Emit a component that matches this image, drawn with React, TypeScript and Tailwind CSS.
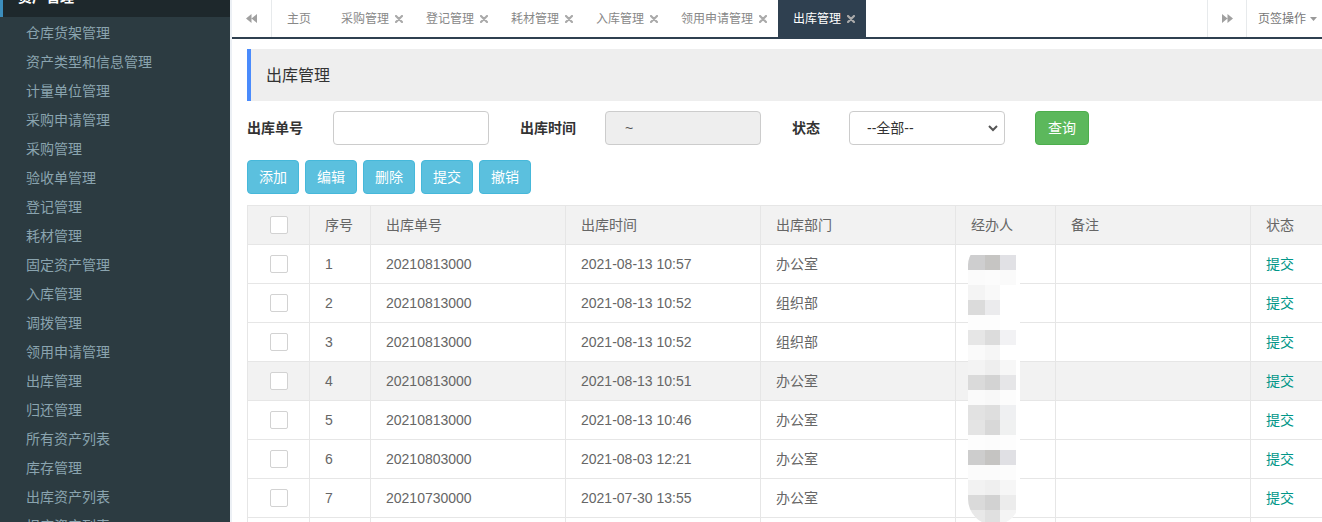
import React from "react";

const menu = [
  "仓库货架管理",
  "资产类型和信息管理",
  "计量单位管理",
  "采购申请管理",
  "采购管理",
  "验收单管理",
  "登记管理",
  "耗材管理",
  "固定资产管理",
  "入库管理",
  "调拨管理",
  "领用申请管理",
  "出库管理",
  "归还管理",
  "所有资产列表",
  "库存管理",
  "出库资产列表",
  "报废资产列表",
];

const tabs = ["采购管理", "登记管理", "耗材管理", "入库管理", "领用申请管理"];

const rows = [
  { no: 1, code: "20210813000", time: "2021-08-13 10:57", dept: "办公室" },
  { no: 2, code: "20210813000", time: "2021-08-13 10:52", dept: "组织部" },
  { no: 3, code: "20210813000", time: "2021-08-13 10:52", dept: "组织部" },
  { no: 4, code: "20210813000", time: "2021-08-13 10:51", dept: "办公室" },
  { no: 5, code: "20210813000", time: "2021-08-13 10:46", dept: "办公室" },
  { no: 6, code: "20210803000", time: "2021-08-03 12:21", dept: "办公室" },
  { no: 7, code: "20210730000", time: "2021-07-30 13:55", dept: "办公室" },
  { no: 8, code: "20210730000", time: "2021-07-30 11:20", dept: "办公室" },
];

// mosaic over the 经办人 column
const blur = [
  ["#cececf", "#c6c5c3", "#e1e1e5"],
  ["#fbfbfb", "#fcfcfc", "#fafafa"],
  ["#f4f4f4", "#f9f9f9", "#ffffff"],
  ["#dbdbdb", "#ebebed", "#ffffff"],
  ["#fdfdfd", "#fdfdfd", "#ffffff"],
  ["#e6e6e6", "#dcdcdc", "#f2f2f4"],
  ["#fafafa", "#f6f6f6", "#ffffff"],
  ["#f3f3f3", "#eeeeee", "#f7f7f7"],
  ["#dadada", "#d3d3d3", "#e6e6e8"],
  ["#fafafa", "#f8f8f8", "#fcfcfc"],
  ["#e2e2e2", "#dedede", "#eff0f2"],
  ["#e4e4e4", "#d8d8d8", "#f0f1f1"],
  ["#fdfdfd", "#fcfcfc", "#fdfdfd"],
  ["#cdcdcd", "#c5c4c2", "#e0e0e4"],
  ["#fbfbfb", "#fbfbfb", "#fcfcfc"],
  ["#f2f2f2", "#efefef", "#f6f6f6"],
  ["#dadada", "#d2d2d2", "#ececec"],
  ["#e8e8e8", "#e0e0e0", "#f4f4f4"],
];

function Close() {
  return (
    <svg width="8" height="8" viewBox="0 0 8 8" className="ml-[6px] shrink-0">
      <path d="M1 1L7 7M7 1L1 7" stroke="#aaaaaa" strokeWidth="2.2" strokeLinecap="round" />
    </svg>
  );
}

function Checkbox() {
  return <div className="w-[18px] h-[18px] border border-[#d2d2d2] rounded-[2px] bg-white" />;
}

const colWidths = ["w-[62px]", "w-[61px]", "w-[195px]", "w-[195px]", "w-[195px]", "w-[100px]", "w-[195px]", "w-[120px]"];

export default function App() {
  return (
    <div className="flex h-[522px] w-[1322px] overflow-hidden bg-[#ecf0f5] font-['Liberation_Sans','Noto_Sans_CJK_SC',sans-serif]">
      {/* sidebar */}
      <aside className="w-[230px] shrink-0 bg-[#2c3b41] flex flex-col">
        <div className="-mt-[23px] h-[40px] shrink-0 bg-[#1e282c] border-l-[3px] border-[#3c8dbc] flex items-center pl-[15px] text-white text-[14px] font-bold">
          资产管理
        </div>
        <ul className="pt-[2px]">
          {menu.map((m) => (
            <li key={m} className="h-[29px] flex items-center pl-[26px] text-[14px] text-[#8aa4af]">
              {m}
            </li>
          ))}
        </ul>
      </aside>

      {/* main */}
      <main className="ml-[2px] flex-1 min-w-0 bg-white flex flex-col overflow-hidden">
        {/* tab bar */}
        <div className="h-[39px] shrink-0 flex border-b-2 border-[#2f4050] bg-white text-[12px] text-[#888]">
          <div className="w-[40px] shrink-0 flex items-center justify-center border-r border-[#e7eaec]">
            <svg width="11" height="9" viewBox="0 0 11 9">
              <path d="M5.5 0L0 4.5 5.5 9z M11 0L5.5 4.5 11 9z" fill="#a0a0a0" />
            </svg>
          </div>
          <div className="flex-1 flex min-w-0">
            <div className="flex items-center pl-[15px] pr-[18px]">主页</div>
            {tabs.map((t) => (
              <div key={t} className="flex items-center pl-[12px] pr-[11px]">
                {t}
                <Close />
              </div>
            ))}
            <div className="flex items-center pl-[15px] pr-[11px] bg-[#2f4050] text-white">
              出库管理
              <Close />
            </div>
          </div>
          <div className="w-[39px] shrink-0 flex items-center justify-center border-l border-[#e7eaec]">
            <svg width="11" height="9" viewBox="0 0 11 9">
              <path d="M0 0L5.5 4.5 0 9z M5.5 0L11 4.5 5.5 9z" fill="#a0a0a0" />
            </svg>
          </div>
          <div className="w-[76px] shrink-0 flex items-center pl-[11px] border-l border-[#e7eaec] text-[#777]">
            页签操作
            <svg width="7" height="4" viewBox="0 0 7 4" className="ml-[4px]">
              <path d="M0 0h7L3.5 4z" fill="#999" />
            </svg>
          </div>
        </div>

        {/* content */}
        <div className="pl-[15px] pt-[10px] flex flex-col">
          <div className="h-[52px] bg-[#eeeeee] border-l-4 border-[#4a8bfc] flex items-center pl-[15px] pt-[2px] text-[16px] text-[#333]">
            出库管理
          </div>

          <div className="mt-[10px] h-[34px] flex items-center text-[14px] text-[#333]">
            <label className="w-[86px] font-bold">出库单号</label>
            <input className="w-[156px] h-[34px] border border-[#ccc] rounded-[4px] px-3 outline-none" />
            <label className="ml-[31px] w-[85px] font-bold">出库时间</label>
            <div className="w-[156px] h-[34px] border border-[#ccc] rounded-[4px] bg-[#eeeeee] flex items-center pl-[19px] text-[#555]">
              ~
            </div>
            <label className="ml-[31px] w-[57px] font-bold">状态</label>
            <div className="relative w-[156px] h-[34px]">
              <select className="appearance-none w-full h-full border border-[#ccc] rounded-[4px] bg-white pl-[17px] text-[14px] text-[#333] outline-none">
                <option>--全部--</option>
              </select>
              <svg width="10" height="7" viewBox="0 0 10 7" className="absolute right-[7px] top-[14px] pointer-events-none">
                <path d="M1 1l4 4 4-4" fill="none" stroke="#555" strokeWidth="2" />
              </svg>
            </div>
            <button className="ml-[30px] w-[54px] h-[34px] rounded-[4px] bg-[#5cb85c] border border-[#4cae4c] text-white text-[14px]">
              查询
            </button>
          </div>

          <div className="mt-[15px] flex gap-[6px]">
            {["添加", "编辑", "删除", "提交", "撤销"].map((b) => (
              <button
                key={b}
                className="h-[34px] px-[11px] rounded-[4px] bg-[#5bc0de] border border-[#46b8da] text-white text-[14px]"
              >
                {b}
              </button>
            ))}
          </div>

          {/* table */}
          <div className="relative mt-[11px] w-[1123px]">
            <table className="w-[1123px] border-collapse text-[14px] text-[#666] table-fixed">
              <colgroup>
                {colWidths.map((w, i) => (
                  <col key={i} className={w} />
                ))}
              </colgroup>
              <thead>
                <tr className="h-[39px] bg-[#f2f2f2]">
                  <th className="border border-[#e6e6e6] font-normal">
                    <div className="flex justify-center">
                      <Checkbox />
                    </div>
                  </th>
                  {["序号", "出库单号", "出库时间", "出库部门", "经办人", "备注", "状态"].map((h) => (
                    <th key={h} className="border border-[#e6e6e6] font-normal text-left px-[15px]">
                      {h}
                    </th>
                  ))}
                </tr>
              </thead>
              <tbody>
                {rows.map((r) => (
                  <tr key={r.no} className={`h-[39px] ${r.no === 4 ? "bg-[#f2f2f2]" : "bg-white"}`}>
                    <td className="border border-[#e6e6e6]">
                      <div className="flex justify-center">
                        <Checkbox />
                      </div>
                    </td>
                    <td className="border border-[#e6e6e6] px-[15px]">{r.no}</td>
                    <td className="border border-[#e6e6e6] px-[15px]">{r.code}</td>
                    <td className="border border-[#e6e6e6] px-[15px]">{r.time}</td>
                    <td className="border border-[#e6e6e6] px-[15px]">{r.dept}</td>
                    <td className="border border-[#e6e6e6] px-[15px]"></td>
                    <td className="border border-[#e6e6e6] px-[15px]"></td>
                    <td className="border border-[#e6e6e6] px-[15px] text-[#009688]">提交</td>
                  </tr>
                ))}
              </tbody>
            </table>

            {/* mosaic blur over names */}
            <div className="absolute left-[721px] top-[40px] w-[52px] flex flex-col bg-white rounded-t-[20px] rounded-b-[26px] overflow-hidden">
              <div className="h-[10px]" />
              {blur.map((line, i) => (
                <div key={i} className="flex h-[15px]">
                  <div className="w-[17px]" style={{ background: line[0] }} />
                  <div className="w-[15px]" style={{ background: line[1] }} />
                  <div className="w-[16px]" style={{ background: line[2] }} />
                  <div className="w-[4px] bg-white" />
                </div>
              ))}
            </div>
          </div>
        </div>
      </main>
    </div>
  );
}
